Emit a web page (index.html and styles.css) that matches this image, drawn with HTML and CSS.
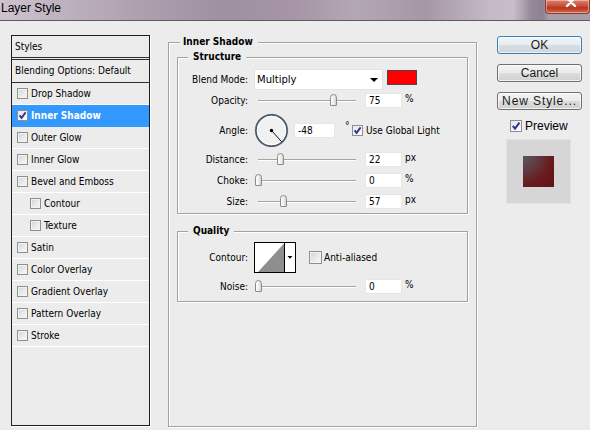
FILE: index.html
```html
<!DOCTYPE html>
<html>
<head>
<meta charset="utf-8">
<title>Layer Style</title>
<link rel="stylesheet" href="styles.css">
</head>
<body>
<div class="window">
  <div class="titlebar">
    <span class="title">Layer Style</span>
    <span class="close"><svg width="43" height="13" viewBox="0 0 43 13"><path d="M21 -2 L29 6 M29 -2 L21 6" stroke="#fff" stroke-width="2.4" stroke-linecap="round"/></svg></span>
  </div>
  <div class="content">
    <div class="sidebar">
      <div class="side-head">Styles</div>
      <div class="side-blend">Blending Options: Default</div>
      <div class="side-item"><span class="cb"></span>Drop Shadow</div>
      <div class="side-item active"><span class="cb on"><svg viewBox="0 0 9 9"><path d="M1.6 4.4 L3.6 6.9 L7.6 1.4" fill="none" stroke="#33338a" stroke-width="1.8"/></svg></span>Inner Shadow</div>
      <div class="side-item"><span class="cb"></span>Outer Glow</div>
      <div class="side-item"><span class="cb"></span>Inner Glow</div>
      <div class="side-item"><span class="cb"></span>Bevel and Emboss</div>
      <div class="side-item sub"><span class="cb"></span>Contour</div>
      <div class="side-item sub"><span class="cb"></span>Texture</div>
      <div class="side-item"><span class="cb"></span>Satin</div>
      <div class="side-item"><span class="cb"></span>Color Overlay</div>
      <div class="side-item"><span class="cb"></span>Gradient Overlay</div>
      <div class="side-item"><span class="cb"></span>Pattern Overlay</div>
      <div class="side-item"><span class="cb"></span>Stroke</div>
    </div>

    <fieldset class="group outer">
      <legend class="legend-outer">Inner Shadow</legend>
      <fieldset class="group structure">
        <legend class="legend-inner">Structure</legend>
        <div class="row">
          <span class="lbl">Blend Mode:</span>
          <div class="select"><span class="select-text">Multiply</span><span class="arrow"></span></div>
          <span class="swatch"></span>
        </div>
        <div class="row">
          <span class="lbl">Opacity:</span>
          <div class="slider"><span class="thumb" style="left:76px"></span></div>
          <span class="num">75</span><span class="unit">%</span>
        </div>
        <div class="row row-angle">
          <span class="lbl">Angle:</span>
          <svg class="dial" width="35" height="35" viewBox="0 0 35 35">
            <circle cx="17.5" cy="17.5" r="16.6" fill="none" stroke="#d6d9de" stroke-width="1"/>
            <circle cx="17.5" cy="17.5" r="15.6" fill="#f1f1f1" stroke="#47566b" stroke-width="1.7"/>
            <circle cx="17.5" cy="17.5" r="14.2" fill="none" stroke="#ffffff" stroke-width="0.9"/>
            <line x1="17.5" y1="17.5" x2="27.6" y2="28.7" stroke="#111" stroke-width="1"/>
            <circle cx="17.5" cy="17.5" r="1.7" fill="#000"/>
          </svg>
          <span class="num num-angle">-48</span>
          <span class="deg">°</span>
          <span class="cb on cb-light"><svg viewBox="0 0 9 9"><path d="M1.6 4.4 L3.6 6.9 L7.6 1.4" fill="none" stroke="#33338a" stroke-width="1.8"/></svg></span>
          <span class="cb-text">Use Global Light</span>
        </div>
        <div class="row">
          <span class="lbl">Distance:</span>
          <div class="slider"><span class="thumb" style="left:23px"></span></div>
          <span class="num">22</span><span class="unit">px</span>
        </div>
        <div class="row">
          <span class="lbl">Choke:</span>
          <div class="slider"><span class="thumb" style="left:1px"></span></div>
          <span class="num">0</span><span class="unit">%</span>
        </div>
        <div class="row">
          <span class="lbl">Size:</span>
          <div class="slider"><span class="thumb" style="left:26px"></span></div>
          <span class="num">57</span><span class="unit">px</span>
        </div>
      </fieldset>

      <fieldset class="group quality">
        <legend class="legend-inner">Quality</legend>
        <div class="row row-contour">
          <span class="lbl">Contour:</span>
          <svg class="contour" width="42" height="31" viewBox="0 0 42 31">
            <rect x="0.5" y="0.5" width="41" height="30" fill="#ffffff" stroke="#000"/>
            <polygon points="4,30 30,1.5 30,30" fill="#8e8e8e"/>
            <line x1="30.5" y1="0" x2="30.5" y2="31" stroke="#000"/>
            <polygon points="33.5,14 38.5,14 36,16.8" fill="#000"/>
          </svg>
          <span class="cb cb-big"></span>
          <span class="cb-text aa">Anti-aliased</span>
        </div>
        <div class="row row-noise">
          <span class="lbl">Noise:</span>
          <div class="slider"><span class="thumb" style="left:1px"></span></div>
          <span class="num">0</span><span class="unit">%</span>
        </div>
      </fieldset>
    </fieldset>

    <div class="buttons">
      <button class="btn default">OK</button>
      <button class="btn">Cancel</button>
      <button class="btn wide">New Style...</button>
      <div class="preview-row">
        <span class="cb on cb-preview"><svg viewBox="0 0 9 9"><path d="M1.6 4.4 L3.6 6.9 L7.6 1.4" fill="none" stroke="#33338a" stroke-width="1.8"/></svg></span>
        <span class="preview-text">Preview</span>
      </div>
      <div class="preview-box"><span class="preview-swatch"></span></div>
    </div>
  </div>
</div>
</body>
</html>
```

FILE: styles.css
```css
html, body {
  margin: 0;
  padding: 0;
}
body {
  width: 590px;
  height: 430px;
  overflow: hidden;
  background: #ececec;
  font-family: "DejaVu Sans Condensed", "DejaVu Sans", sans-serif;
  font-stretch: condensed;
  font-size: 10px;
  color: #000;
}
.window {
  width: 590px;
  height: 430px;
}
.titlebar {
  height: 20px;
  display: flex;
  align-items: flex-start;
  border-bottom: 1px solid #625b66;
  background: linear-gradient(90deg, #cdc3ce 0%, #bfb3c0 10%, #ae9faf 24%, #9f90a1 38%, #a595a6 50%, #b4a7b5 60%, #a697a7 72%, #c4b9c5 83%, #c8bec9 87%, #968a98 90%, #8d8291 92%, #a89ca9 93%);
}
.title {
  font-family: "Liberation Sans", Arial, sans-serif;
  font-stretch: normal;
  font-size: 12px;
  line-height: 17px;
  padding-left: 1px;
  color: #000;
}
.close {
  margin-left: auto;
  width: 43px;
  height: 13px;
  border: 1px solid #8a3b30;
  border-top: none;
  border-radius: 0 0 4px 4px;
  background: linear-gradient(#d9826f 0%, #c94f39 45%, #b8341f 60%, #d36a4f 100%);
  box-shadow: inset 0 0 0 1px rgba(255, 220, 210, 0.5);
  display: flex;
}
.content {
  display: flex;
  align-items: flex-start;
  padding-top: 14px;
}

/* sidebar */
.sidebar {
  margin-left: 11px;
  width: 139px;
  height: 391px;
  box-sizing: border-box;
  border: 1px solid #1e1e1e;
  box-shadow: 1px 1px 0 #ffffff;
  flex: none;
}
.side-head {
  height: 21px;
  line-height: 21px;
  padding-left: 3px;
  border-bottom: 3px double #2e2e2e;
}
.side-blend {
  height: 22px;
  line-height: 22px;
  padding-left: 3px;
  border-bottom: 1px solid #2e2e2e;
}
.side-item {
  height: 21px;
  display: flex;
  align-items: center;
  gap: 3px;
  padding-left: 5px;
  border-bottom: 1px solid #ffffff;
}
.side-item.sub {
  padding-left: 18px;
}
.side-item.active {
  background: #3399ff;
  border-bottom-color: #3399ff;
  color: #fff;
  font-weight: bold;
}

/* checkboxes */
.cb {
  width: 11px;
  height: 11px;
  box-sizing: border-box;
  border: 1px solid #8e8f8f;
  background: linear-gradient(135deg, #d2d2d2 0%, #ececec 60%, #f8f8f8 100%);
  box-shadow: inset 0 0 0 1px #f2f2f2;
  flex: none;
  display: inline-flex;
}
.cb.on {
  background: linear-gradient(135deg, #dfe5f3 0%, #ffffff 100%);
  box-shadow: none;
}
.cb svg {
  width: 9px;
  height: 9px;
}
.cb-big {
  width: 13px;
  height: 13px;
}
.cb-text {
  margin-left: 3px;
  white-space: nowrap;
}
.cb-text.aa {
  margin-left: 2px;
}

/* group boxes */
fieldset.group {
  margin: 0;
  padding: 0;
  min-width: 0;
  box-sizing: border-box;
  border: 1px solid #a2a2a2;
  box-shadow: inset 1px 1px 0 #ffffff, 1px 1px 0 #ffffff;
}
fieldset.group legend {
  font-weight: bold;
  line-height: 14px;
  background: #ececec;
}
.outer {
  margin-left: 18px !important;
  width: 309px;
  height: 392px;
  flex: none;
  padding: 0 8px !important;
}
.legend-outer {
  margin-left: 3px;
  padding: 0 5px 0 3px;
}
.legend-inner {
  margin-left: 10px;
  padding: 0 5px;
}
.structure {
  margin-top: 1px !important;
  padding: 5px 0 1px 0 !important;
}
.quality {
  margin-top: 10px !important;
  padding: 4px 0 4px 0 !important;
}

/* rows */
.row {
  display: flex;
  align-items: center;
  height: 21px;
}
.row-angle {
  height: 38px;
}
.row-contour {
  height: 31px;
}
.row-noise {
  margin-top: 3px;
}
.lbl {
  width: 70px;
  margin-right: 6px;
  text-align: right;
  flex: none;
  white-space: nowrap;
}
.select {
  width: 129px;
  height: 21px;
  box-sizing: border-box;
  background: #fff;
  border: 1px solid #e4e4e4;
  display: flex;
  align-items: center;
  justify-content: space-between;
  padding: 0 4px 0 2px;
  flex: none;
}
.select-text {
  font-stretch: normal;
  font-family: "DejaVu Sans", sans-serif;
}
.arrow {
  width: 0;
  height: 0;
  border-left: 4px solid transparent;
  border-right: 4px solid transparent;
  border-top: 4px solid #000;
}
.swatch {
  width: 30px;
  height: 15px;
  box-sizing: border-box;
  margin-left: 4px;
  background: #ff0000;
  border: 1px solid #4a4a4a;
  flex: none;
  align-self: flex-start;
  margin-top: 1px;
}
.slider {
  position: relative;
  width: 106px;
  height: 21px;
  flex: none;
  background: linear-gradient(#a4a4a4, #a4a4a4) no-repeat 4px 10px / 98px 1px,
              linear-gradient(#ffffff, #ffffff) no-repeat 4px 11px / 98px 1px;
}
.thumb {
  position: absolute;
  top: 4px;
  width: 7px;
  height: 12px;
  box-sizing: border-box;
  border: 1px solid #8a8a8a;
  border-radius: 3.5px 3.5px 1px 1px;
  background: linear-gradient(90deg, #ffffff 0%, #f0f0f0 50%, #d2d2d2 100%);
}
.num {
  width: 37px;
  height: 15px;
  box-sizing: border-box;
  margin-left: 5px;
  background: #fff;
  border: 1px solid #e6e6e6;
  padding-left: 3px;
  line-height: 13px;
  flex: none;
}
.num-angle {
  width: 41px;
  margin-left: 5px;
}
.unit {
  margin-left: 3px;
  align-self: flex-start;
  margin-top: 2px;
  line-height: 13px;
}
.deg {
  margin-left: 10px;
  align-self: flex-start;
  margin-top: 10px;
  line-height: 10px;
  width: 4px;
}
.cb-light {
  margin-left: 3px;
}
.dial {
  flex: none;
}
.contour {
  flex: none;
  margin-right: 13px;
}

/* buttons column */
.buttons {
  margin-left: 20px;
  width: 85px;
  flex: none;
  display: flex;
  flex-direction: column;
}
.btn {
  display: block;
  width: 85px;
  height: 18px;
  margin: 10px 0 0 0;
  padding: 0;
  box-sizing: border-box;
  border: 1px solid #707070;
  border-radius: 3px;
  background: linear-gradient(#f3f3f3 0%, #ebebeb 48%, #dcdcdc 52%, #d0d0d0 100%);
  box-shadow: inset 0 0 0 1px rgba(255, 255, 255, 0.7);
  font-family: "Liberation Sans", Arial, sans-serif;
  font-stretch: normal;
  font-weight: normal;
  font-size: 12px;
  line-height: 15px;
  color: #1a1a1a;
}
.btn.default {
  margin-top: 1px;
  border-color: #3c7fb1;
  box-shadow: inset 0 0 0 1px rgba(255, 255, 255, 0.6);
  background: linear-gradient(#f2f5f8 0%, #e6ecf1 48%, #d6dde3 52%, #cfd6dc 100%);
}
.btn.wide {
  letter-spacing: 0.9px;
}
.preview-row {
  margin-top: 8px;
  height: 16px;
  display: flex;
  align-items: center;
  padding-left: 13px;
}
.cb-preview {
  width: 12px;
  height: 12px;
}
.cb-preview svg {
  width: 10px;
  height: 10px;
}
.preview-text {
  margin-left: 3px;
  font-family: "Liberation Sans", Arial, sans-serif;
  font-stretch: normal;
  font-size: 12px;
}
.preview-box {
  margin-top: 5px;
  margin-left: 9px;
  width: 65px;
  height: 65px;
  box-sizing: border-box;
  background: #d6d6d6;
  border: 1px solid #e2e2e2;
  display: flex;
  align-items: center;
  justify-content: center;
}
.preview-swatch {
  width: 31px;
  height: 31px;
  background: radial-gradient(circle at 0 0, #5d5660 0%, #5f3a40 35%, #691a1d 65%, #5e1214 100%);
}
```
